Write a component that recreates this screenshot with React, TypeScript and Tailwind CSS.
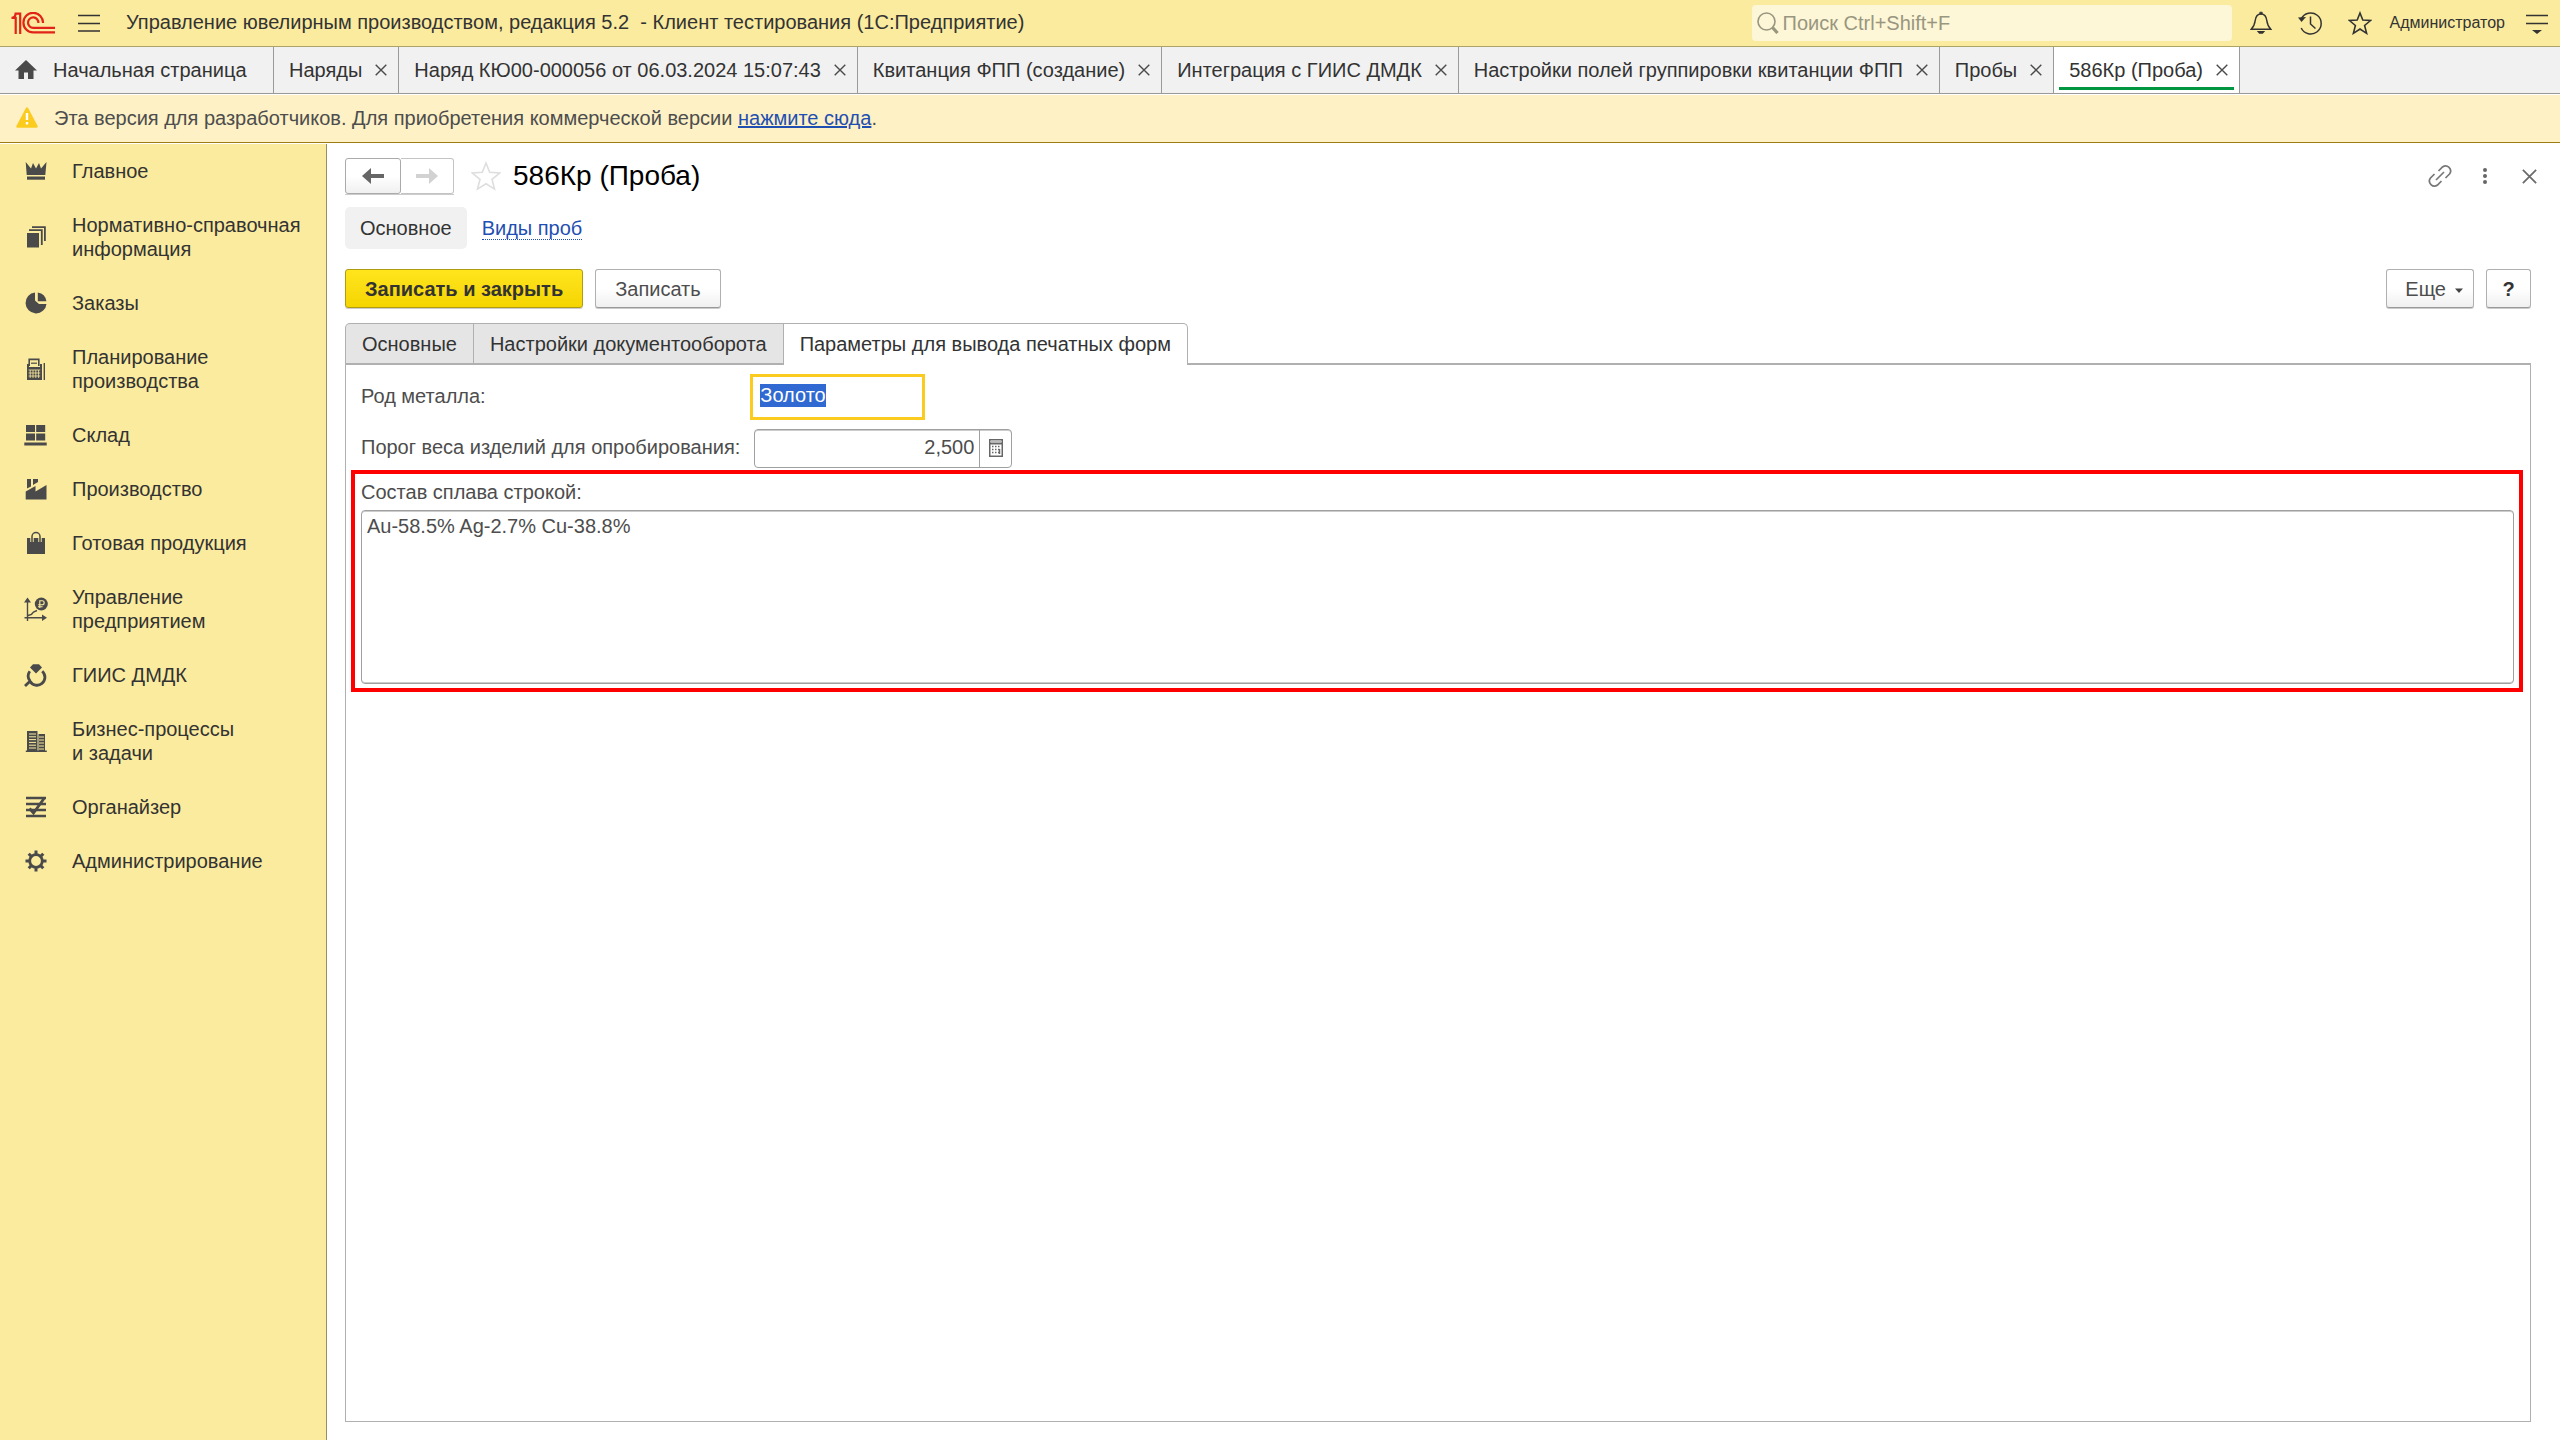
import { useEffect, useRef, type ReactNode } from "react";

function Logo() {
  return (
    <svg width="44" height="22" viewBox="0 0 44 22" fill="none" stroke="#e2231a" strokeWidth="2.2" aria-label="1С">
      <path d="M9.2 22V1.6H4.6C4.4 3.9 3 5.9 0.5 5.9H4.7V22" />
      <path d="M32 11A9.8 9.8 0 1 0 22.2 20.4H44" />
      <path d="M27.4 11A5.2 5.2 0 1 0 22.2 15.8H44" />
    </svg>
  );
}

function Cross({ size, color }: { size: number; color: string }) {
  return (
    <svg width={size} height={size} viewBox="0 0 12 12" fill="none" stroke={color} strokeWidth="1.4">
      <path d="M0.7 0.7 11.3 11.3M11.3 0.7 0.7 11.3" />
    </svg>
  );
}

function Svg({ children }: { children: ReactNode }) {
  return (
    <svg className="shrink-0" width="24" height="24" viewBox="0 0 24 24" fill="#4a4a4a" aria-hidden="true">
      {children}
    </svg>
  );
}

const sections: { label: string[]; icon: ReactNode }[] = [
  {
    label: ["Главное"],
    icon: (
      <Svg>
        <path d="M1.7 3 7 9.5 9 4l3 5.5L15 4l2 5.5L22.5 3 21.3 16H2.7Z" />
        <path d="M3 17.5h18v3.2H3Z" />
      </Svg>
    ),
  },
  {
    label: ["Нормативно-справочная", "информация"],
    icon: (
      <Svg>
        <path d="M3 8h12v14.5H3Z" />
        <path d="M5 5.2h12.8V20M8 2.2h12.9V16" fill="none" stroke="#4a4a4a" strokeWidth="1.8" />
      </Svg>
    ),
  },
  {
    label: ["Заказы"],
    icon: (
      <Svg>
        <path d="M11 1.5A10.5 10.5 0 1 0 22.5 13H15L11 9.5Z" />
        <path d="M13.8 1.6A10.3 10.3 0 0 1 22.4 10.2H13.8Z" />
      </Svg>
    ),
  },
  {
    label: ["Планирование", "производства"],
    icon: (
      <Svg>
        <path d="M3 7h2v3h11V7h2v16H3Z" />
        <path d="M5.2 9V2.4h9.6V9" fill="none" stroke="#4a4a4a" strokeWidth="1.6" />
        <path d="M7 5.6h6v1.2H7Z" />
        <path d="M20.3 6v17" stroke="#4a4a4a" strokeWidth="1.4" />
        <path d="M4.6 13h11.6M4.6 16h11.6M4.6 19h11.6M6.2 13v8M9 13v8M11.8 13v8M14.6 13v8" stroke="#fbeb9e" strokeWidth="0.8" />
      </Svg>
    ),
  },
  {
    label: ["Склад"],
    icon: (
      <Svg>
        <path d="M2 2h9v7H2ZM12.2 2h9v7h-9ZM2 10.5h9v7H2ZM12.2 10.5h9v7h-9ZM0.3 19.5h22.4v3H0.3Z" />
      </Svg>
    ),
  },
  {
    label: ["Производство"],
    icon: (
      <Svg>
        <path d="M1.7 22.5V14.5L11.5 9v5.5L22.5 8v14.5Z" />
        <path d="M3 2h4v7.5L3 11.5ZM9 2h5v3l-5 3Z" />
      </Svg>
    ),
  },
  {
    label: ["Готовая продукция"],
    icon: (
      <Svg>
        <path d="M3 7h18v16H3Z" />
        <path d="M8 11V5.5a4 4 0 0 1 8 0V11" fill="none" stroke="#fbeb9e" strokeWidth="3.4" />
        <path d="M8 11V5.5a4 4 0 0 1 8 0V11" fill="none" stroke="#4a4a4a" strokeWidth="1.5" />
      </Svg>
    ),
  },
  {
    label: ["Управление", "предприятием"],
    icon: (
      <Svg>
        <path d="M3.5 24V3M0.5 20.8H21M4 18.5l3.500-1.2 2-2.3 3.500-1.500" fill="none" stroke="#4a4a4a" strokeWidth="1.4" />
        <path d="M3.5 0.5 7 5.5H0ZM23 20.8 18 17.6V24Z" />
        <circle cx="17.3" cy="7" r="6.5" />
        <path d="M15.8 11V3.8h2.4a1.9 1.9 0 0 1 0 4h-4M14 9.7h4.6" fill="none" stroke="#fbeb9e" strokeWidth="1.1" />
      </Svg>
    ),
  },
  {
    label: ["ГИИС ДМДК"],
    icon: (
      <Svg>
        <path d="M9 1.2h6l3 3.2-6 6-6-6Z" />
        <path d="M5.8 8.2A8 8 0 0 0 6 17.8M18.2 8.2A8 8 0 1 1 6 18.2L1 23" fill="none" stroke="#4a4a4a" strokeWidth="2.8" />
      </Svg>
    ),
  },
  {
    label: ["Бизнес-процессы", "и задачи"],
    icon: (
      <Svg>
        <path d="M3 2h10.5v20H3ZM14.5 5H21v17h-6.5ZM1.8 21.5h21V23h-21Z" />
        <path d="M5 5h7M5 7.8h7M5 10.6h7M5 13.4h7M5 16.2h7M5 19h7M15 8h5M15 11h5M15 14h5M15 17h5M15 20h5" stroke="#fbeb9e" strokeWidth="1" />
      </Svg>
    ),
  },
  {
    label: ["Органайзер"],
    icon: (
      <Svg>
        <path d="M2 3h20M2 9h20M2 15h20M2 21h20" stroke="#4a4a4a" strokeWidth="2.4" />
        <path d="M5.5 13.5 9.5 18 20 3.5" fill="none" stroke="#4a4a4a" strokeWidth="2.8" />
      </Svg>
    ),
  },
  {
    label: ["Администрирование"],
    icon: (
      <Svg>
        <circle cx="12" cy="12" r="6.3" fill="none" stroke="#4a4a4a" strokeWidth="2.8" />
        <path
          d="M12 1.5v4M12 18.5v4M1.5 12h4M18.5 12h4M4.7 4.7 7.4 7.4M16.6 16.6l2.7 2.7M4.7 19.3l2.7-2.7M16.6 7.4l2.7-2.7"
          stroke="#4a4a4a"
          strokeWidth="3"
        />
      </Svg>
    ),
  },
];

const windows = [
  "Наряды",
  "Наряд КЮ00-000056 от 06.03.2024 15:07:43",
  "Квитанция ФПП (создание)",
  "Интеграция с ГИИС ДМДК",
  "Настройки полей группировки квитанции ФПП",
  "Пробы",
  "586Кр (Проба)",
];

function TopBar() {
  return (
    <header className="flex h-[47px] items-center border-b border-[#aca366] bg-[#fbeb9e] pr-3 pl-[11px] text-[#333]">
      <Logo />
      <button aria-label="Меню" className="ml-[23px]">
        <svg width="22" height="18" viewBox="0 0 22 18" stroke="#333" strokeWidth="1.5">
          <path d="M0 1.5h22M0 9.5h22M0 17h22" />
        </svg>
      </button>
      <h1 className="ml-[26px] pb-[2px] whitespace-pre">
        Управление ювелирным производством, редакция 5.2{"  "}- Клиент тестирования (1С:Предприятие)
      </h1>
      <label className="ml-auto flex h-9 w-[480px] items-center gap-1 rounded-sm bg-[#fdf7d7] pl-[5px]">
        <svg width="22" height="22" viewBox="0 0 22 22" fill="none" stroke="#99967f">
          <circle cx="9.5" cy="9.5" r="8.5" strokeWidth="1.6" />
          <path d="m15.5 15.5 5 5.5" strokeWidth="3.2" />
        </svg>
        <input
          type="search"
          aria-label="Поиск"
          placeholder="Поиск Ctrl+Shift+F"
          className="min-w-0 flex-1 bg-transparent outline-none placeholder:text-[#99967f]"
        />
      </label>
      <div className="ml-[18px] flex items-center gap-[26px]">
        <button aria-label="Оповещения">
          <svg width="22" height="24" viewBox="0 0 22 24" fill="none" stroke="#333" strokeWidth="1.5">
            <path d="M1.2 18.3C4 15.5 4.700 13.5 5.200 9.5 5.800 5 7.500 3 11 3s5.200 2 5.800 6.500c.5 4 1.200 6 4 8.800Z" />
            <path d="M9.8 3V1.2h2.4V3Z" fill="#333" strokeWidth="0.8" />
            <path d="M6.8 20h8.4L12.8 22.8H9.2Z" fill="#333" stroke="none" />
          </svg>
        </button>
        <button aria-label="История">
          <svg width="24" height="24" viewBox="0 0 24 24" fill="none" stroke="#333" strokeWidth="1.5">
            <path d="M3.2 8A10.5 10.5 0 1 1 3.2 17" />
            <path d="M12.5 5.5V13l5 4.5" />
            <path d="M0 6.5 8 6l-4.5 5Z" fill="#333" stroke="none" />
          </svg>
        </button>
        <button aria-label="Избранное">
          <svg width="24" height="24" viewBox="0 0 24 24" fill="none" stroke="#333" strokeWidth="1.6">
            <path d="m12 2 2.8 7 7.8.5-6 5 2 7.8L12 18l-6.6 4.300 2-7.8-6-5 7.8-.5Z" />
          </svg>
        </button>
      </div>
      <button className="ml-[18px] pb-px text-base">Администратор</button>
      <button aria-label="Настройки" className="ml-[21px]">
        <svg width="22" height="22" viewBox="0 0 22 22" stroke="#333" strokeWidth="1.5">
          <path d="M0 3.5h22M0 11.5h22" />
          <path d="M6 18h10l-5 4Z" fill="#333" stroke="none" />
        </svg>
      </button>
    </header>
  );
}

function WindowTabs() {
  return (
    <nav className="flex h-[47px] border-b border-[#9a9a9a] bg-[#f1f1f1] text-[#333]">
      <button className="flex w-[274px] items-center gap-4 border-r border-[#9a9a9a] pl-[15px]">
        <svg width="22" height="20" viewBox="0 0 22 20" fill="#4a4a4a">
          <path d="M11 0 22 10.5h-3.500V19H13v-6.500H9V19H3.500v-8.500H0Z" />
        </svg>
        Начальная страница
      </button>
      {windows.map((w) => {
        const active = w === "586Кр (Проба)";
        return (
          <div
            key={w}
            className={`relative flex items-center gap-[13px] border-r border-[#9a9a9a] pr-[11px] pl-[15px] whitespace-nowrap ${active ? "bg-white" : ""}`}
          >
            <button>{w}</button>
            <button aria-label={`Закрыть ${w}`}>
              <Cross size={12} color="#4a4a4a" />
            </button>
            {active && <span className="absolute inset-x-[5px] bottom-[3px] h-[3px] bg-[#00963f]" />}
          </div>
        );
      })}
    </nav>
  );
}

function Banner() {
  return (
    <div className="mt-px flex h-12 items-center gap-4 border-b border-[#9b7d14] bg-[#fdf1c5] pb-[2px] pl-4 text-[#4d4d4d]">
      <svg width="22" height="21" viewBox="0 0 22 21">
        <path d="M11 1.5 20.5 19.5h-19Z" fill="#fbcb1f" stroke="#fbcb1f" strokeWidth="2.5" strokeLinejoin="round" />
        <path d="M11 6v7M11 15v2.5" stroke="#fff" strokeWidth="2.4" />
      </svg>
      <p>
        Эта версия для разработчиков. Для приобретения коммерческой версии{" "}
        <a href="#buy" className="text-[#1f4fb2] underline">
          нажмите сюда
        </a>
        .
      </p>
    </div>
  );
}

function Sidebar() {
  return (
    <aside className="w-[327px] shrink-0 border-r border-[#97905f] bg-[#fbeb9e] text-[#333]">
      {sections.map((s) => (
        <button key={s.label[0]} className="flex w-full items-center gap-6 py-[15px] pl-6 text-left">
          {s.icon}
          <span>
            {s.label.map((l) => (
              <span key={l} className="block">
                {l}
              </span>
            ))}
          </span>
        </button>
      ))}
    </aside>
  );
}

const plain = "rounded-[3px] border border-[#b0b0b0] border-b-[#999] bg-linear-to-b from-white from-50% to-[#f0f0f0] shadow-[0_1px_0_#ccc]";

function FormHeader() {
  return (
    <div className="flex items-center">
      <div className="flex h-9 shadow-[0_1px_0_#ccc]">
        <button aria-label="Назад" className="flex w-14 items-center justify-center rounded-[3px] border border-[#aaa] bg-linear-to-b from-white from-50% to-[#f0f0f0]">
          <svg width="22" height="16" viewBox="0 0 22 16" fill="#666">
            <path d="M0 8 9 0v6h13v4H9v6Z" />
          </svg>
        </button>
        <button aria-label="Вперед" className="flex w-[53px] items-center justify-center rounded-r-[3px] border border-l-0 border-[#c4c4c4]">
          <svg width="22" height="16" viewBox="0 0 22 16" fill="#d2d2d2">
            <path d="M22 8 13 0v6H0v4h13v6Z" />
          </svg>
        </button>
      </div>
      <button aria-label="В избранное" className="ml-[17px]">
        <svg width="30" height="30" viewBox="0 0 30 30" fill="none" stroke="#dedede" strokeWidth="1.6">
          <path d="m15 2 3.7 9.3 10 .7-7.7 6.3 2.5 9.8L15 22.8 6.5 28.1 9 18.3 1.3 12l10-.7Z" />
        </svg>
      </button>
      <h2 className="ml-3 text-[28px] leading-9 text-black">586Кр (Проба)</h2>
      <button aria-label="Ссылка" className="ml-auto">
        <svg width="24" height="24" viewBox="0 0 24 24" fill="none" stroke="#777" strokeWidth="1.7">
          <path d="M10.5 7 14.5 3A5 5 0 0 1 21.5 10L17.5 14M13.5 17 9.5 21A5 5 0 0 1 2.5 14L6.5 10M8 16l8-8" />
        </svg>
      </button>
      <button aria-label="Действия" className="ml-[31px]">
        <svg width="4" height="16" viewBox="0 0 4 16" fill="#666">
          <circle cx="2" cy="2" r="2" />
          <circle cx="2" cy="8" r="2" />
          <circle cx="2" cy="14" r="2" />
        </svg>
      </button>
      <button aria-label="Закрыть" className="ml-[35px]">
        <Cross size={15} color="#6a6a6a" />
      </button>
    </div>
  );
}

function Fields() {
  const metal = useRef<HTMLInputElement>(null);
  useEffect(() => {
    metal.current?.focus();
    metal.current?.select();
  }, []);
  return (
    <div role="tabpanel" className="flex-1 border border-t-0 border-[#b0b0b0] pt-[13px] pr-[7px] pl-[5px] text-[#4d4d4d]">
      <div className="grid grid-cols-[auto_1fr] items-center gap-x-[14px] gap-y-[13px] pl-[10px]">
        <label htmlFor="metal" className="pb-[3px]">
          Род металла:
        </label>
        <input
          id="metal"
          ref={metal}
          defaultValue="Золото"
          className="h-[38px] w-[167px] bg-white pb-[3px] pl-[6px] outline-3 outline-offset-1 outline-[#fbcb1f] selection:bg-[#3169d2] selection:text-white"
        />
        <label htmlFor="weight" className="pb-[3px]">
          Порог веса изделий для опробирования:
        </label>
        <div className="flex h-[39px] w-[258px] rounded-[4px] border border-[#a0a0a0] bg-white shadow-[inset_0_1px_0_#ccc]">
          <input
            id="weight"
            defaultValue="2,500"
            className="min-w-0 flex-1 bg-transparent pr-[5px] pb-[3px] text-right outline-none"
          />
          <button aria-label="Калькулятор" className="flex w-8 items-center justify-center border-l border-[#a0a0a0] pb-[2px]">
            <svg width="14" height="18" viewBox="0 0 14 18" fill="none" stroke="#666">
              <rect x="0.75" y="0.75" width="12.5" height="16.5" strokeWidth="1.5" />
              <path d="M1 4.5h12" strokeWidth="2" />
              <path d="M1 2.5h12" stroke="#bbb" />
              <path d="M3 7.5h8M3 10.5h8M3 13.5h8" strokeWidth="1.5" strokeDasharray="1.5 1.5" />
              <path d="M10.5 10v5" strokeWidth="1.5" />
            </svg>
          </button>
        </div>
      </div>
      <div className="mt-[2px] flex flex-col border-4 border-[#ff0000] pt-[6px] pr-[5px] pb-1 pl-[6px]">
        <label htmlFor="alloy">Состав сплава строкой:</label>
        <textarea
          id="alloy"
          defaultValue="Au-58.5% Ag-2.7% Cu-38.8%"
          className="mt-[6px] h-[174px] resize-none rounded-[4px] border border-[#a0a0a0] bg-white px-[5px] py-[3px] shadow-[inset_0_1px_0_#ccc,inset_0_-1px_0_#ccc] outline-none"
        />
      </div>
    </div>
  );
}

export default function App() {
  return (
    <div className="flex min-h-screen flex-col bg-white font-['Liberation_Sans',Arial,sans-serif] text-[20px] leading-6">
      <TopBar />
      <WindowTabs />
      <Banner />
      <div className="mt-px flex flex-1">
        <Sidebar />
        <main className="flex min-w-0 flex-1 flex-col pt-[14px] pr-[23px] pb-[18px] pl-[18px]">
          <FormHeader />
          <div className="mr-[6px] flex flex-1 flex-col">
            <nav className="mt-[13px] flex items-center gap-[15px]">
              <a href="#main" className="flex h-[42px] items-center rounded-[5px] bg-[#f1f1f1] px-[15px] text-[#333]">
                Основное
              </a>
              <a href="#kinds" className="border-b border-dotted border-[#1f4fb2] leading-[22px] text-[#1f4fb2]">
                Виды проб
              </a>
            </nav>
            <div className="mt-5 flex h-[39px] gap-3">
              <button className="rounded-[3px] border border-[#b09c10] bg-linear-to-b from-[#ffe51c] to-[#f5d500] px-[19px] font-bold text-[#333] shadow-[0_1px_0_#ccc]">
                Записать и закрыть
              </button>
              <button className={`${plain} px-[19px] text-[#4d4d4d]`}>Записать</button>
              <button className={`${plain} ml-auto flex items-center gap-[9px] pr-[10px] pl-[18px] text-[#4d4d4d]`}>
                Еще
                <svg width="8" height="8" viewBox="0 0 8 8" fill="#444">
                  <path d="M0 3.500h8L4 8Z" />
                </svg>
              </button>
              <button aria-label="Справка" className={`${plain} w-[45px] font-bold text-[#333]`}>
                ?
              </button>
            </div>
            <div role="tablist" className="mt-[15px] flex h-[42px] text-[#333]">
              <button role="tab" aria-selected="false" className="rounded-tl-[5px] border border-b-2 border-[#b0b0b0] bg-[#e5e5e5] px-4">
                Основные
              </button>
              <button role="tab" aria-selected="false" className="border border-b-2 border-l-0 border-[#b0b0b0] bg-[#e5e5e5] px-4">
                Настройки документооборота
              </button>
              <button role="tab" aria-selected="true" className="rounded-tr-[5px] border-t border-r border-[#b0b0b0] bg-white px-4 pb-[2px]">
                Параметры для вывода печатных форм
              </button>
              <span className="flex-1 border-b-2 border-[#b0b0b0]" />
            </div>
            <Fields />
          </div>
        </main>
      </div>
    </div>
  );
}
